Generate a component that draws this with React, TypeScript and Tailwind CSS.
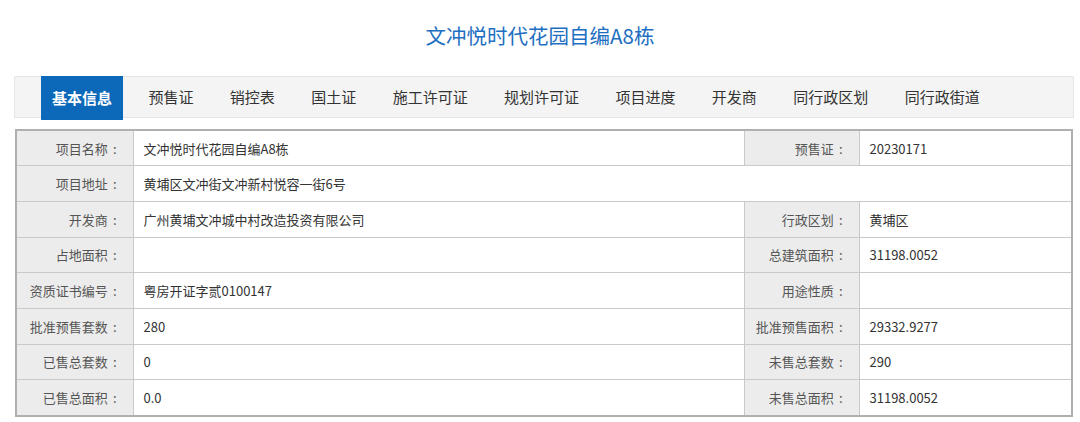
const tabs = [
  "基本信息",
  "预售证",
  "销控表",
  "国土证",
  "施工许可证",
  "规划许可证",
  "项目进度",
  "开发商",
  "同行政区划",
  "同行政街道",
];

type Row = { l1: string; v1: string; l2?: string; v2?: string };

const rows: Row[] = [
  { l1: "项目名称", v1: "文冲悦时代花园自编A8栋", l2: "预售证", v2: "20230171" },
  { l1: "项目地址", v1: "黄埔区文冲街文冲新村悦容一街6号" },
  { l1: "开发商", v1: "广州黄埔文冲城中村改造投资有限公司", l2: "行政区划", v2: "黄埔区" },
  { l1: "占地面积", v1: "", l2: "总建筑面积", v2: "31198.0052" },
  { l1: "资质证书编号", v1: "粤房开证字贰0100147", l2: "用途性质", v2: "" },
  { l1: "批准预售套数", v1: "280", l2: "批准预售面积", v2: "29332.9277" },
  { l1: "已售总套数", v1: "0", l2: "未售总套数", v2: "290" },
  { l1: "已售总面积", v1: "0.0", l2: "未售总面积", v2: "31198.0052" },
];

function Label({ text, width }: { text: string; width: string }) {
  return (
    <td
      className={`${width} border border-[#c9c9c9] bg-[#ececec] pr-[16px] text-right text-[13px] text-[#555]`}
    >
      {text}
      <span className="ml-[5px]">:</span>
    </td>
  );
}

function Value({ text, span, width }: { text: string; span?: number; width?: string }) {
  return (
    <td
      colSpan={span}
      className={`${width ?? ""} border border-[#c9c9c9] bg-white pl-[10px] text-left text-[13px] text-[#333]`}
    >
      {text}
    </td>
  );
}

export default function App() {
  return (
    <div className="h-[422px] w-[1080px] overflow-hidden bg-white font-['Noto_Sans_CJK_SC',sans-serif]">
      {/* Title */}
      <h1 className="h-[76px] pt-[21px] text-center text-[20.5px] leading-[28px] text-[#1e6fc1]">
        文冲悦时代花园自编A8栋
      </h1>

      <div className="ml-[14px] w-[1060px]">
        {/* Tab bar */}
        <div className="flex h-[42px] items-start gap-[14.4px] border border-[#e6e6e6] bg-[#f4f4f4] pl-[26px]">
          {tabs.map((t, i) =>
            i === 0 ? (
              <div
                key={t}
                className="-mt-px flex h-[44px] items-center bg-[#0c68b9] px-[11px] text-[15px] font-bold text-white"
              >
                {t}
              </div>
            ) : (
              <div key={t} className="flex h-[41px] items-center px-[11px] text-[15px] text-[#333]">
                {t}
              </div>
            ),
          )}
        </div>

        {/* Info table */}
        <table className="ml-px mt-[11px] w-[1058px] table-fixed border-collapse border-2 border-[#b0b0b0] leading-none">
          <tbody>
            {rows.map((r) => (
              <tr key={r.l1} className="h-[35.7px]">
                <Label text={r.l1} width="w-[117px]" />
                {r.l2 ? (
                  <>
                    <Value text={r.v1} width="w-[611px]" />
                    <Label text={r.l2} width="w-[115px]" />
                    <Value text={r.v2 ?? ""} />
                  </>
                ) : (
                  <Value text={r.v1} span={3} />
                )}
              </tr>
            ))}
          </tbody>
        </table>
      </div>
    </div>
  );
}
